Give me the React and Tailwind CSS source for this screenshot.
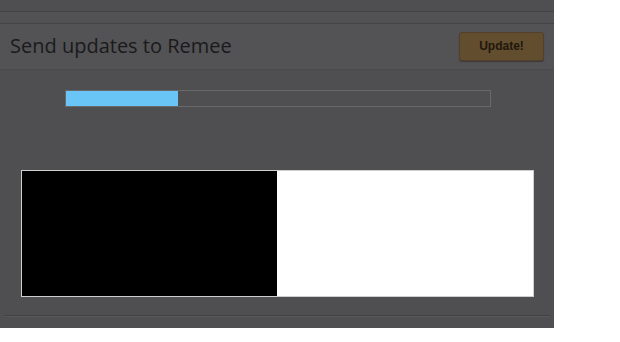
export default function App() {
  return (
    <div className="w-[620px] h-[342px] bg-white" style={{ fontFamily: '"Open Sans", "Noto Sans", sans-serif' }}>
      <div className="w-[554px] h-[328px] bg-[#4f4e51] flex flex-col">
        <div className="h-[12px] border-b border-[#434245]" />
        <div className="h-[12px] border-b border-[#444346] bg-[#525154]" />
        <div className="h-[46px] flex items-center justify-between pl-[10px] pr-[10px] bg-[#535255] border-b border-[#4a494c]">
          <span className="text-[20px] text-[#1a1a1c] leading-none -mt-[1px]">Send updates to Remee</span>
          <button className="w-[85px] h-[29px] -mt-[1px] rounded-[3px] bg-[#634d2f] border border-[#52402a] text-[12px] font-bold text-[#20170c] shadow-[0_1px_1px_rgba(0,0,0,0.3)]" style={{ fontFamily: '"Liberation Sans", Arial, sans-serif' }}>
            Update!
          </button>
        </div>
        <div className="pl-[65px] pt-[20px]">
          <div className="w-[426px] h-[17px] border border-[#69686b] flex">
            <div className="w-[112px] h-full bg-[#69c5f6]" />
          </div>
        </div>
        <div className="pl-[21px] pt-[63px]">
          <div className="w-[513px] h-[127px] border border-[#cfcfcf] flex">
            <div className="w-[255px] h-full bg-black" />
            <div className="flex-1 h-full bg-white" />
          </div>
        </div>
        <div className="mt-[18px] ml-[5px] mr-[4px] h-[2px] border-t border-[#403f42] bg-[#59585b]" />
      </div>
    </div>
  );
}
